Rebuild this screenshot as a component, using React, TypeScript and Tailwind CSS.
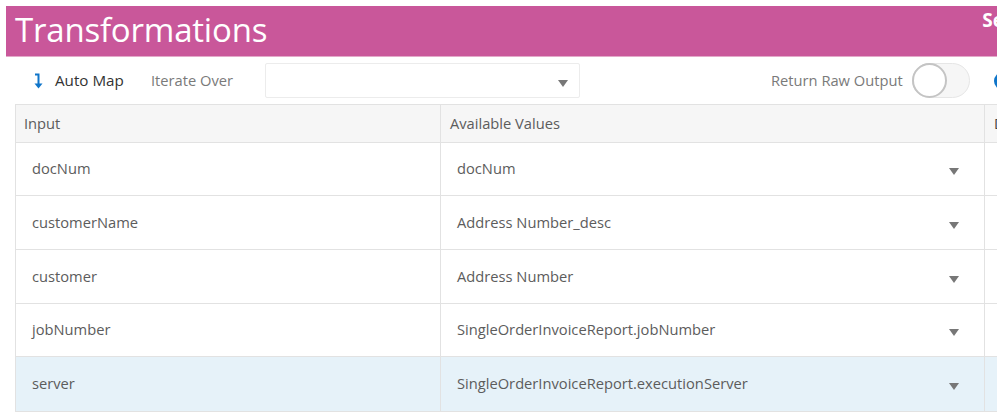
const rows = [
  { input: 'docNum', value: 'docNum', height: 'h-[53px]' },
  { input: 'customerName', value: 'Address Number_desc', height: 'h-[54px]' },
  { input: 'customer', value: 'Address Number', height: 'h-[54px]' },
  { input: 'jobNumber', value: 'SingleOrderInvoiceReport.jobNumber', height: 'h-[53px]' },
  { input: 'server', value: 'SingleOrderInvoiceReport.executionServer', height: 'h-[54px]', selected: true },
]

function Caret() {
  return <span className="h-0 w-0 border-x-[5px] border-t-[7px] border-x-transparent border-t-[#777]" />
}

export default function App() {
  return (
    <div className="h-[412px] w-[1006px] overflow-hidden bg-white pl-[6px] pt-[6px] font-['Open_Sans','Noto_Sans',sans-serif] text-[14.7px] text-[#5c5c5c]">
      <div className="w-[991px]">
        <div className="flex h-[51px] items-start justify-between overflow-hidden border-b border-[#e3a9c9] bg-[#c9579a] pl-[9px] text-white">
          <h1 className="mt-[1px] text-[33px] leading-[46px] font-normal tracking-[-0.2px]">Transformations</h1>
          <span className="mt-[2px] -mr-[7px] text-[19px] leading-[24px] font-bold whitespace-nowrap">Se</span>
        </div>

        <div className="flex h-[47px] items-center pl-[26px]">
          <svg width="12" height="18" viewBox="0 0 12 18" fill="none" className="shrink-0">
            <path d="M3 2.5h3.5v11" stroke="#0f75c9" strokeWidth="2" />
            <path d="M2.5 11.5h8l-4 5z" fill="#0f75c9" />
          </svg>
          <span className="ml-[11px] w-[96px] text-[15.2px] whitespace-nowrap text-[#333]">Auto Map</span>
          <span className="w-[114px] whitespace-nowrap text-[#7a7a7a]">Iterate Over</span>
          <div className="flex h-[35px] w-[315px] items-center justify-end rounded-[2px] border border-[#ececec] pr-[11px] pt-[6px]">
            <Caret />
          </div>
          <span className="ml-[191px] w-[132px] whitespace-nowrap text-[#7a7a7a]">Return Raw Output</span>
          <div className="ml-[9px] flex h-[35px] w-[58px] shrink-0 items-center rounded-full border border-[#e6e6e6] bg-[#f6f6f6]">
            <span className="-ml-px size-[35px] rounded-full border-2 border-[#c4c4c4] bg-white" />
          </div>
          <span className="ml-[24px] h-[18px] w-[3px] shrink-0 overflow-hidden">
            <span className="block size-[18px] rounded-full bg-[#0f75c9]" />
          </span>
        </div>

        <div className="ml-[9px] border-b-[2px] border-l border-[#e2e2e2]">
          <div className="flex h-[39px] items-center border-y border-[#e2e2e2] bg-[#f6f6f6]">
            <div className="flex h-full w-[425px] items-center border-r border-[#e2e2e2] pl-[8px]">Input</div>
            <div className="flex h-full w-[544px] items-center border-r border-[#e2e2e2] pl-[9px]">Available Values</div>
            <div className="w-[12px] overflow-hidden pl-[9px] text-[#444]">D</div>
          </div>
          {rows.map((row) => (
            <div
              key={row.input}
              className={`flex ${row.height} ${row.selected ? 'bg-[#e6f2f9]' : 'border-b bg-white'} border-[#e2e2e2]`}
            >
              <div className="flex w-[425px] items-center border-r border-[#e2e2e2] pb-[1px] pl-[16px]">{row.input}</div>
              <div className="flex w-[544px] items-center justify-between border-r border-[#e2e2e2] pb-[1px] pl-[16px] pr-[25px]">
                <span>{row.value}</span>
                <span className="mt-[6px] flex"><Caret /></span>
              </div>
            </div>
          ))}
        </div>
      </div>
    </div>
  )
}
